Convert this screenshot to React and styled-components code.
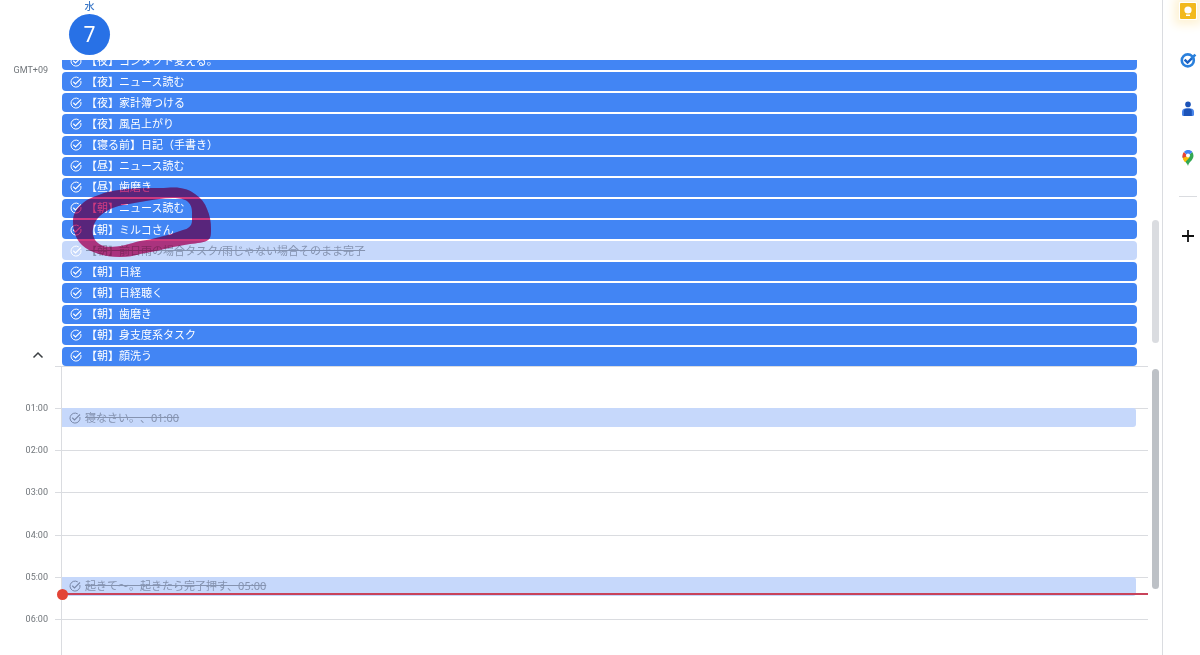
import React from "react";
import styled, { createGlobalStyle } from "styled-components";

const allDayTasks = [
  { title: "【夜】コンタクト変える。" },
  { title: "【夜】ニュース読む" },
  { title: "【夜】家計簿つける" },
  { title: "【夜】風呂上がり" },
  { title: "【寝る前】日記（手書き）" },
  { title: "【昼】ニュース読む" },
  { title: "【昼】歯磨き" },
  { title: "【朝】ニュース読む" },
  { title: "【朝】ミルコさん" },
  { title: "【朝】前日雨の場合タスク/雨じゃない場合そのまま完了", done: true },
  { title: "【朝】日経" },
  { title: "【朝】日経聴く" },
  { title: "【朝】歯磨き" },
  { title: "【朝】身支度系タスク" },
  { title: "【朝】顔洗う" },
];

const hours = [
  { label: "" },
  { label: "01:00", task: "寝なさい。、01:00" },
  { label: "02:00" },
  { label: "03:00" },
  { label: "04:00" },
  { label: "05:00", task: "起きて〜。起きたら完了押す、05:00" },
  { label: "06:00" },
];

const TaskIcon = () => (
  <svg width="12" height="12" viewBox="0 0 24 24" fill="none" aria-hidden="true">
    <path
      d="M17.5 3.8A10 10 0 1 0 21.8 10"
      stroke="currentColor"
      strokeWidth="2"
    />
    <path d="M6.5 11.5l4.5 4.5L22 5" stroke="currentColor" strokeWidth="2.2" />
  </svg>
);

const App = () => {
  return (
    <>
      <GlobalStyle />
      <Page>
        <Calendar>
          <DayHeader>
            <Weekday>水</Weekday>
            <DayNumber type="button">7</DayNumber>
          </DayHeader>
          <AllDay>
            <AllDayGutter>
              <Zone>GMT+09</Zone>
              <CollapseButton type="button" aria-label="折りたたむ">
                <svg width="12" height="12" viewBox="0 0 12 12" fill="none">
                  <path d="M1.5 8.5L6 4l4.5 4.5" stroke="#3c4043" strokeWidth="1.5" />
                </svg>
              </CollapseButton>
            </AllDayGutter>
            <AllDayViewport>
              <TaskList>
                {allDayTasks.map((task) => (
                  <Task key={task.title} $done={task.done}>
                    <TaskIcon />
                    <TaskTitle $done={task.done}>{task.title}</TaskTitle>
                  </Task>
                ))}
              </TaskList>
            </AllDayViewport>
            <ScrollTrack>
              <ScrollThumb $color="#dadce0" $top={160} $length={123} />
            </ScrollTrack>
            <Marker $blend="multiply" color="#cc3a80" />
            <Marker $blend="normal" color="#d83c80" opacity="0.22" />
          </AllDay>
          <TimeGrid>
            <HourList>
              {hours.map((hour) => (
                <Hour key={hour.label}>
                  <HourLabel>{hour.label}</HourLabel>
                  <Tick />
                  <HourSlot>
                    {hour.task && (
                      <TimedTask>
                        <TaskIcon />
                        <TaskTitle $done>{hour.task}</TaskTitle>
                      </TimedTask>
                    )}
                  </HourSlot>
                </Hour>
              ))}
              <NowLine />
            </HourList>
            <ScrollTrack>
              <ScrollThumb $color="#bdc1c6" $top={3} $length={220} />
            </ScrollTrack>
          </TimeGrid>
        </Calendar>
        <SidePanel>
          <PanelButton type="button" aria-label="Keep" $glow>
            <KeepIcon />
          </PanelButton>
          <PanelButton type="button" aria-label="ToDo リスト">
            <TodoIcon />
          </PanelButton>
          <PanelButton type="button" aria-label="連絡先">
            <ContactsIcon />
          </PanelButton>
          <PanelButton type="button" aria-label="マップ">
            <MapsIcon />
          </PanelButton>
          <PanelRule />
          <PanelButton type="button" aria-label="アドオンを取得">
            <svg width="14" height="14" viewBox="0 0 14 14">
              <path d="M7 1v12M1 7h12" stroke="#111" strokeWidth="1.8" />
            </svg>
          </PanelButton>
        </SidePanel>
      </Page>
    </>
  );
};

export default App;

const Marker = ({ $blend, color, opacity = "1" }) => (
  <MarkerSvg
    $blend={$blend}
    width="144"
    height="76"
    viewBox="70 184 144 76"
    aria-hidden="true"
  >
    <path
      fillRule="evenodd"
      d="M73 221C73 214 77 208 82 204C87 199 93 197 99 195C106 192 112 191 119 190C132 188 146 188 160 188C168 188 174 187 180 188C187 189 191 191 195 194C201 198 205 203 207 209C210 216 211 222 211 229C211 234 211 238 208 240C204 243 197 243 190 244C184 245 179 246 173 247C161 250 151 252 140 254C134 256 128 257 120 257C112 257 105 256 99 254C92 252 86 249 82 245C76 239 73 231 73 221Z
         M93 229C94 221 99 216 105 212C111 208 117 206 123 205C129 204 134 203 140 202C152 200 163 198 173 198C180 198 184 199 187 201C191 204 192 208 192 212L192 221C192 226 188 229 183 230C175 233 168 235 160 237C153 239 147 240 140 241C129 244 119 247 110 247C103 247 98 244 95 240C93 236 92 233 93 229Z"
      fill={color}
      opacity={opacity}
    />
  </MarkerSvg>
);

const KeepIcon = () => (
  <svg width="18" height="18" viewBox="0 0 18 18">
    <rect x="1" y="1" width="16" height="16" rx="1" fill="#f2b91d" />
    <circle cx="9" cy="8" r="3.6" fill="#fff" />
    <path d="M7 12.6h4v1.4H7z" fill="#fff" />
  </svg>
);

const TodoIcon = () => (
  <svg width="18" height="18" viewBox="0 0 18 18" fill="none">
    <circle cx="8.8" cy="9.4" r="6" stroke="#2a80dc" strokeWidth="2.6" />
    <path d="M5.6 8.6l3 3L13 7.2" stroke="#1b62c4" strokeWidth="2.4" />
    <path d="M12.6 7.4L16.4 3.6" stroke="#2a80dc" strokeWidth="2.6" />
  </svg>
);

const ContactsIcon = () => (
  <svg width="18" height="18" viewBox="0 0 18 18">
    <circle cx="9" cy="4.4" r="2.8" fill="#1c53b8" />
    <path
      d="M3 14.500V12q0-3.500 3.500-3.500h5q3.500 0 3.500 3.500v2.500q0 1.500-1.500 1.500h-9Q3 16 3 14.500z"
      fill="#4a86ea"
    />
    <path d="M4.800 16v-4.500q0-3 3-3h2.500q2.500 0 2.500 3V16z" fill="#1c53b8" />
  </svg>
);

const MapsIcon = () => (
  <svg width="18" height="18" viewBox="0 0 18 18">
    <path
      d="M9 17c-.6-3.400-5.500-5.600-5.500-10.300L9 6.700l4.200-3.800c3 4.500.2 7.600-2.200 10.200C10 14.300 9.500 15.500 9 17z"
      fill="#34a853"
    />
    <path d="M3.700 8.400L9 6.700l1.500 1.800-4.400 4.800C5 12 4 10.300 3.700 8.400z" fill="#fbbc04" />
    <path d="M3.500 6.700c0-1.500.6-2.800 1.500-3.800L9 6.700 3.800 9C3.600 8.200 3.500 7.500 3.500 6.700z" fill="#ea4335" />
    <path d="M5 2.900C7.300.4 11.300.6 13.400 3L9 6.700z" fill="#4285f4" />
    <circle cx="9" cy="6.600" r="2" fill="#fff" />
  </svg>
);

const GlobalStyle = createGlobalStyle`
  * {
    box-sizing: border-box;
  }

  body {
    margin: 0;
    background: #fff;
    font-family: Roboto, "Noto Sans CJK JP", sans-serif;
    overflow: hidden;
  }

  button {
    padding: 0;
    border: 0;
    background: none;
    font-family: inherit;
  }
`;

const Page = styled.div`
  display: flex;
  height: 100vh;
  overflow: hidden;
`;

const Calendar = styled.main`
  flex: 1;
  min-width: 0;
  display: flex;
  flex-direction: column;
`;

const DayHeader = styled.header`
  display: flex;
  flex-direction: column;
  align-items: center;
  flex-shrink: 0;
  width: 55px;
  height: 60px;
  margin-left: 62px;
`;

const Weekday = styled.span`
  color: #3b78c8;
  font-size: 10px;
  font-weight: 500;
  line-height: 14px;
`;

const DayNumber = styled.button`
  width: 41px;
  height: 41px;
  border-radius: 50%;
  background: #2871e6;
  color: #fff;
  font-family: "Noto Sans", sans-serif;
  font-size: 21px;
  line-height: 41px;
`;

const AllDay = styled.section`
  position: relative;
  display: flex;
  flex-shrink: 0;
  height: 306px;
`;

const AllDayGutter = styled.div`
  display: flex;
  flex-direction: column;
  justify-content: space-between;
  align-items: flex-end;
  width: 62px;
  padding: 4px 14px 5px 0;
`;

const Zone = styled.span`
  color: #70757a;
  font-size: 9px;
  line-height: 12px;
`;

const CollapseButton = styled.button`
  display: flex;
  padding: 0 4px 0 0;
`;

const AllDayViewport = styled.div`
  flex: 1;
  min-width: 0;
  display: flex;
  flex-direction: column;
  justify-content: flex-end;
  overflow: hidden;
`;

const TaskList = styled.ul`
  display: grid;
  grid-auto-rows: 1fr;
  row-gap: 2px;
  flex-shrink: 0;
  height: 315px;
  margin: 0 11px 0 0;
  padding: 0;
  list-style: none;
`;

const Task = styled.li`
  display: flex;
  align-items: center;
  gap: 4px;
  min-height: 0;
  padding: 0 8px;
  border-radius: 4px;
  background: ${({ $done }) => ($done ? "#c6d8fb" : "#4285f4")};
  color: #fff;
`;

const TaskTitle = styled.span`
  color: ${({ $done }) => ($done ? "#8593b0" : "inherit")};
  font-family: "Noto Sans", "Noto Sans CJK JP", sans-serif;
  font-size: 11px;
  line-height: 16px;
  white-space: nowrap;
  text-spacing-trim: space-all;
  text-decoration: ${({ $done }) => ($done ? "line-through" : "none")};
`;

const MarkerSvg = styled.svg`
  position: absolute;
  top: 124px;
  left: 70px;
  mix-blend-mode: ${({ $blend }) => $blend};
  pointer-events: none;
`;

const ScrollTrack = styled.div`
  flex-shrink: 0;
  width: 14px;
  padding-left: 4px;
`;

const ScrollThumb = styled.div`
  width: 7px;
  height: ${({ $length }) => $length}px;
  margin-top: ${({ $top }) => $top}px;
  border-radius: 4px;
  background: ${({ $color }) => $color};
`;

const TimeGrid = styled.section`
  display: flex;
  flex: 1;
  min-height: 0;
`;

const HourList = styled.div`
  position: relative;
  display: grid;
  grid-auto-rows: 1fr;
  flex: 1;
  min-width: 0;
  height: 295px;
`;

const Hour = styled.div`
  display: flex;
  min-height: 0;
`;

const HourLabel = styled.span`
  width: 55px;
  padding-right: 7px;
  margin-top: -6px;
  color: #70757a;
  font-size: 9px;
  line-height: 12px;
  text-align: right;
`;

const Tick = styled.span`
  width: 6px;
  border-top: 1px solid #dadce0;
`;

const HourSlot = styled.div`
  flex: 1;
  border-top: 1px solid #dadce0;
  border-left: 1px solid #dadce0;
`;

const TimedTask = styled.div`
  display: flex;
  align-items: center;
  gap: 4px;
  height: 19px;
  margin: -1px 12px 0 0;
  padding: 0 7px;
  border-radius: 0 3px 3px 0;
  background: #c6d8fb;
  color: #7a88a8;
`;

const NowLine = styled.div`
  position: absolute;
  top: 227px;
  left: 62px;
  right: 0;
  height: 2px;
  background: #c8435a;

  &::before {
    content: "";
    position: absolute;
    top: -4px;
    left: -5px;
    width: 11px;
    height: 11px;
    border-radius: 50%;
    background: #e34436;
  }
`;

const SidePanel = styled.aside`
  display: flex;
  flex-direction: column;
  align-items: center;
  flex-shrink: 0;
  width: 38px;
  padding-left: 12px;
  border-left: 1px solid #dadce0;

  > :first-child {
    margin-top: -14px;
  }
`;

const PanelButton = styled.button`
  display: flex;
  align-items: center;
  justify-content: center;
  flex-shrink: 0;
  width: 25px;
  height: 49px;

  svg {
    border-radius: 1px;
    box-shadow: ${({ $glow }) => ($glow ? "0 0 10px 5px #fef3d6" : "none")};
  }
`;

const PanelRule = styled.hr`
  width: 18px;
  margin: 14px 0;
  border: 0;
  border-top: 1px solid #dadce0;
`;
